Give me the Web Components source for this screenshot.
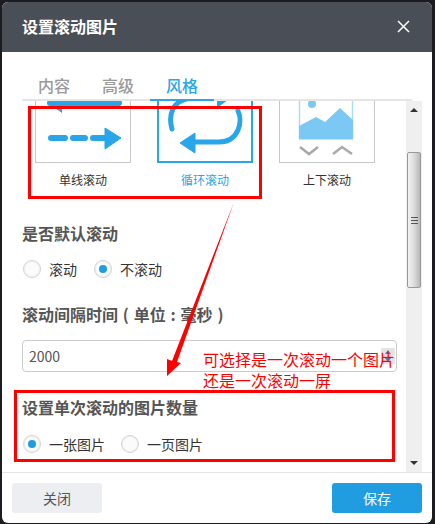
<!DOCTYPE html>
<html lang="zh">
<head>
<meta charset="UTF-8">
<title>设置滚动图片</title>
<style>
  html, body { margin: 0; height: 100%; background: #1b1b20; overflow: hidden; }
  body { font-family: "Noto Sans CJK SC", "Liberation Sans", sans-serif; padding: 2px 3px 1px 2px; box-sizing: border-box; }
</style>
</head>
<body>
<set-modal>
  <span slot="title">设置滚动图片</span>

  <style-tabs slot="tabs"></style-tabs>

  <div style="display:flex;gap:26px;padding-left:13px;margin-top:-34px">
    <style-card label="单线滚动">
      <svg width="96" height="96" viewBox="0 0 96 96">
        <path d="M15 36H84" stroke="#29a5ea" stroke-width="6" stroke-linecap="round"/>
        <path d="M13 36L27 28V46Z" fill="#29a5ea"/>
        <path d="M16 71H30M38 71H50M58 71H72" stroke="#29a5ea" stroke-width="6" stroke-linecap="round"/>
        <path d="M70 61L86 71L70 82Z" fill="#29a5ea" stroke="#29a5ea" stroke-linejoin="round"/>
      </svg>
    </style-card>
    <style-card label="循环滚动" active>
      <svg width="96" height="96" viewBox="0 0 96 96">
        <g fill="none" stroke="#29a5ea" stroke-width="5" stroke-linecap="round">
          <path d="M15 62C11 48 15 32 36 31H62"/>
          <path d="M81 44C86 54 82 75 62 75H36"/>
        </g>
        <path d="M23 76L38 66V86Z" fill="#29a5ea" stroke="#29a5ea" stroke-linejoin="round"/>
        <path d="M75 30L60 20V41Z" fill="#29a5ea"/>
      </svg>
    </style-card>
    <style-card label="上下滚动">
      <svg width="96" height="96" viewBox="0 0 96 96">
        <rect x="20.5" y="14" width="53" height="58" fill="#fff" stroke="#a9dcf9" stroke-width="1.5"/>
        <circle cx="33" cy="37" r="4" fill="#7cc8f5"/>
        <path d="M20 59L37 50L46 55L61 41L74 53V72H20Z" fill="#7cc8f5"/>
        <g fill="none" stroke="#aaa" stroke-width="2.6">
          <path d="M21 80L30 87L39 80"/>
          <path d="M54 87L63 80L73 87"/>
        </g>
      </svg>
    </style-card>
  </div>

  <field-title style="margin-top:32px">是否默认滚动</field-title>
  <radio-row style="margin-top:14px">
    <radio-item>滚动</radio-item>
    <radio-item checked>不滚动</radio-item>
  </radio-row>

  <field-title style="margin-top:23px;word-spacing:1.2px">滚动间隔时间 ( 单位 : 毫秒 )</field-title>
  <number-box style="margin-top:14px">2000</number-box>

  <field-title style="margin-top:23px">设置单次滚动的图片数量</field-title>
  <radio-row style="margin-top:15px;gap:15px">
    <radio-item checked>一张图片</radio-item>
    <radio-item>一页图片</radio-item>
  </radio-row>

  <modal-button slot="footer">关闭</modal-button>
  <modal-button slot="footer" primary>保存</modal-button>
</set-modal>

<red-notes></red-notes>

<script>
  // Modal frame: header, tabs, clipped scroll area with its bar, footer
  class SetModal extends HTMLElement {
    constructor() {
      super();
      this.attachShadow({ mode: 'open' }).innerHTML = `
        <style>
          :host { display: flex; flex-direction: column; height: 100%; background: #fff; border-radius: 6px; overflow: hidden; color: #555; }
          header { flex: 0 0 50px; box-sizing: border-box; padding: 0 22px 2px 20px; display: flex; align-items: center; justify-content: space-between; background: #4a4f57; color: #fff; font-size: 16px; font-weight: 700; }
          .tabs { flex: 0 0 49px; padding: 0 20px; }
          .middle { flex: 1; min-height: 0; display: flex; padding-right: 10px; border-bottom: 1px solid #e5e5e5; }
          .content { flex: 1; min-width: 0; overflow: hidden; padding: 0 10px 0 20px; }
          footer { flex: 0 0 50px; display: flex; justify-content: space-between; align-items: center; padding: 0 10px; box-sizing: border-box; }
          svg { display: block; }
        </style>
        <header>
          <slot name="title"></slot>
          <svg width="13" height="13" viewBox="0 0 13 13"><path d="M1 1L12 12M12 1L1 12" stroke="#fff" stroke-width="1.5"/></svg>
        </header>
        <div class="tabs"><slot name="tabs"></slot></div>
        <div class="middle">
          <div class="content"><slot></slot></div>
          <scroll-rail></scroll-rail>
        </div>
        <footer><slot name="footer"></slot></footer>`;
    }
  }

  class StyleTabs extends HTMLElement {
    constructor() {
      super();
      this.attachShadow({ mode: 'open' }).innerHTML = `
        <style>
          :host { display: flex; height: 49px; box-sizing: border-box; padding-top: 20px; border-bottom: 2px solid #e5e5e5; font-size: 16px; font-weight: 500; color: #999; }
          div { width: 64px; height: 29px; line-height: 26px; text-align: center; box-sizing: border-box; }
          .on { color: #29a5ea; border-bottom: 2px solid #29a5ea; }
        </style>
        <div>内容</div><div>高级</div><div class="on">风格</div>`;
    }
  }

  class StyleCard extends HTMLElement {
    constructor() {
      super();
      this.attachShadow({ mode: 'open' }).innerHTML = `
        <style>
          :host { display: block; width: 96px; font-size: 12px; color: #333; text-align: center; }
          :host([active]) { color: #29a5ea; }
          .box { height: 96px; box-sizing: border-box; border: 1px solid #c8c8c8; overflow: hidden; }
          :host([active]) .box { border: 2px solid #29a5ea; }
          .box ::slotted(svg) { display: block; margin: -1px; }
          :host([active]) .box ::slotted(svg) { margin: -2px; }
          .label { margin-top: 8px; line-height: 18px; }
        </style>
        <div class="box"><slot></slot></div>
        <div class="label"></div>`;
    }
    connectedCallback() {
      this.shadowRoot.querySelector('.label').textContent = this.getAttribute('label');
    }
  }

  class FieldTitle extends HTMLElement {
    constructor() {
      super();
      this.attachShadow({ mode: 'open' }).innerHTML = `
        <style>:host { display: block; font-size: 16px; line-height: 24px; font-weight: 700; color: #555; }</style>
        <slot></slot>`;
    }
  }

  class RadioRow extends HTMLElement {
    constructor() {
      super();
      this.attachShadow({ mode: 'open' }).innerHTML = `
        <style>:host { display: flex; gap: 16px; height: 20px; align-items: center; }</style>
        <slot></slot>`;
    }
  }

  class RadioItem extends HTMLElement {
    constructor() {
      super();
      this.attachShadow({ mode: 'open' }).innerHTML = `
        <style>
          :host { display: flex; align-items: center; gap: 8px; font-size: 14px; color: #333; }
          i { width: 18px; height: 18px; margin-left: 1px; box-sizing: border-box; border: 1px solid #d4d4d4; border-radius: 50%; background: #fbfbfb; box-shadow: inset 0 0 0 1px #f0f0f0; display: flex; align-items: center; justify-content: center; }
          :host([checked]) i::after { content: ""; width: 8px; height: 8px; border-radius: 50%; background: #1f9de0; }
        </style>
        <i></i><slot></slot>`;
    }
  }

  class NumberBox extends HTMLElement {
    constructor() {
      super();
      this.attachShadow({ mode: 'open' }).innerHTML = `
        <style>
          :host { display: flex; align-items: center; justify-content: space-between; width: 375px; height: 32px; box-sizing: border-box; border: 1px solid #ccc; border-radius: 4px; padding: 0 1px 0 6px; font-size: 14px; color: #555; }
          .spin { display: flex; flex-direction: column; gap: 1px; width: 14px; }
          .spin span { height: 7.5px; background: #e4e4e4; display: flex; align-items: center; justify-content: center; }
          .up::after, .down::after { content: ""; border: 3px solid transparent; }
          .up::after { border-bottom: 4px solid #5a6ea8; border-top: 0; }
          .down::after { border-top: 4px solid #5a6ea8; border-bottom: 0; }
        </style>
        <slot></slot>
        <div class="spin"><span class="up"></span><span class="down"></span></div>`;
    }
  }

  class ScrollRail extends HTMLElement {
    constructor() {
      super();
      this.attachShadow({ mode: 'open' }).innerHTML = `
        <style>
          :host { flex: 0 0 16px; display: flex; flex-direction: column; align-items: stretch; background: #efefef; }
          .arrow { flex: 0 0 18px; display: flex; align-items: center; justify-content: center; }
          .arrow::after { content: ""; border: 4px solid transparent; }
          .top::after { border-bottom: 4px solid #333; border-top: 0; }
          .bottom::after { border-top: 4px solid #333; border-bottom: 0; }
          .gap { flex: 0 0 33px; }
          .thumb { flex: 0 0 136px; box-sizing: border-box; margin: 0 1px; border: 1px solid #999; border-radius: 2px; background: linear-gradient(90deg, #f2f2f2, #dcdcdc 50%, #b8b8b8); display: flex; align-items: center; justify-content: center; }
          .thumb::after { content: ""; width: 7px; height: 7px; background: repeating-linear-gradient(#555 0 1px, transparent 1px 3px); }
          .rest { flex: 1; }
        </style>
        <div class="arrow top"></div><div class="gap"></div><div class="thumb"></div>
        <div class="rest"></div><div class="arrow bottom"></div>`;
    }
  }

  class ModalButton extends HTMLElement {
    constructor() {
      super();
      this.attachShadow({ mode: 'open' }).innerHTML = `
        <style>
          :host { display: block; width: 90px; height: 30px; line-height: 30px; text-align: center; border-radius: 3px; background: #eceef2; color: #555; font-size: 14px; }
          :host([primary]) { background: #1f9de0; color: #fff; }
        </style>
        <slot></slot>`;
    }
  }

  // Hand-drawn red marks lying over the dialog
  class RedNotes extends HTMLElement {
    constructor() {
      super();
      this.attachShadow({ mode: 'open' }).innerHTML = `
        <style>
          :host { position: absolute; inset: 0; pointer-events: none; }
          svg { position: absolute; left: 0; top: 0; }
          p { position: absolute; left: 203px; top: 349px; margin: 0; color: #f00; font-size: 16px; line-height: 21px; white-space: nowrap; }
        </style>
        <svg width="435" height="524" viewBox="0 0 435 524">
          <rect x="29.5" y="107.5" width="231" height="90" fill="none" stroke="#f00" stroke-width="3"/>
          <rect x="15.5" y="391.5" width="378" height="69" fill="none" stroke="#f00" stroke-width="3"/>
          <path d="M234 202L177 362L181 363L167 376L167 359L172 361Z" fill="#f00"/>
        </svg>
        <p>可选择是一次滚动一个图片<br>还是一次滚动一屏</p>`;
    }
  }

  customElements.define('set-modal', SetModal);
  customElements.define('style-tabs', StyleTabs);
  customElements.define('style-card', StyleCard);
  customElements.define('field-title', FieldTitle);
  customElements.define('radio-row', RadioRow);
  customElements.define('radio-item', RadioItem);
  customElements.define('number-box', NumberBox);
  customElements.define('scroll-rail', ScrollRail);
  customElements.define('modal-button', ModalButton);
  customElements.define('red-notes', RedNotes);
</script>
</body>
</html>
